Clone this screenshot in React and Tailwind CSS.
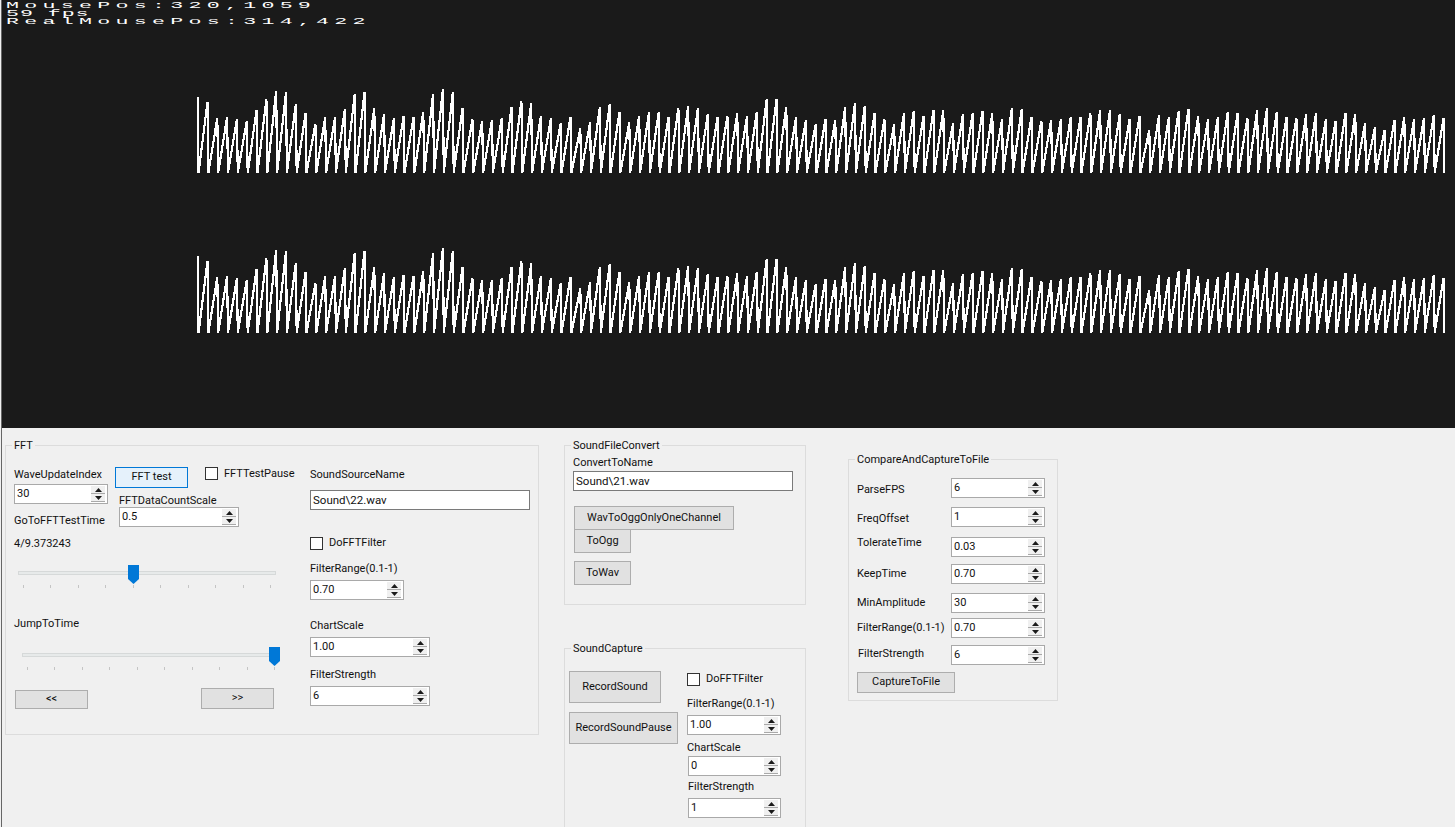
const TOPS = [
  35, 50, 100, 97, 103, 108, 75, 43, 18, 22, 58, 85, 118, 97, 97, 72, 28, 22, 70, 88, 100, 92, 97, 80, 28, 13, 22, 70, 102, 108,
  105, 100, 67, 48, 55, 92, 100, 115, 95, 130, 112, 65, 58, 80, 112, 92, 82, 80, 97, 68, 62, 68, 88, 97, 92, 85, 92, 80, 43, 43, 65, 95, 105,
  118, 103, 105, 67, 55, 63, 85, 102, 118, 85, 78, 92, 75, 75, 115, 88, 85, 78, 85, 102, 70, 73, 95, 108, 105, 102, 97, 97, 85, 75, 75, 87, 102,
  93, 135, 90, 97, 78, 72, 93, 102, 97, 82, 85, 99, 75, 70, 82, 97, 99, 88, 85, 102, 108, 85, 87, 115, 127, 135, 105, 97, 102, 99, 90, 99,
];

function wavePoints(offset) {
  const points = [];
  TOPS.forEach((top, i) => {
    const x = 197.7 + i * 9.81;
    const lift = offset > 0 && i < 30 ? 1 : 0;
    points.push(`${x.toFixed(1)},${(85 + top / 3 + offset - lift).toFixed(1)}`);
    // last peak just drops straight down, no hook at the right end
    points.push(`${(i < TOPS.length - 1 ? x + 0.9 : x).toFixed(1)},${172.5 + offset}`);
  });
  return points.join(" ");
}

function Label({ children, className = "" }) {
  return <div className={`h-4 whitespace-nowrap text-[11px] leading-4 ${className}`}>{children}</div>;
}

function Arrow({ down }) {
  return (
    <svg width="7" height="4" viewBox="0 0 7 4">
      <polygon points={down ? "0,0 7,0 3.5,4" : "0,4 7,4 3.5,0"} fill="#1a1a1a" />
    </svg>
  );
}

function Spinner({ value, className = "" }) {
  return (
    <div className={`flex h-5 items-stretch border border-[#a9a9a9] bg-white ${className}`}>
      <span className="flex-1 pl-0.5 text-[11px] leading-[17px]">{value}</span>
      <div className="my-px mr-0.5 flex w-[14px] flex-col bg-[#f0f0f0]">
        <div className="flex flex-1 items-center justify-center border-b border-[#a9a9a9]"><Arrow /></div>
        <div className="flex flex-1 items-center justify-center border-b border-[#a9a9a9]"><Arrow down /></div>
      </div>
    </div>
  );
}

function TextBox({ value, className = "" }) {
  return <div className={`h-5 border border-[#7a7a7a] bg-white pl-0.5 text-[11.5px] leading-[18px] ${className}`}>{value}</div>;
}

function Button({ children, focused, className = "" }) {
  const tone = focused ? "border-[#0078d7] bg-[#e5f1fb]" : "border-[#adadad] bg-[#e1e1e1]";
  return (
    <div className={`flex items-center justify-center border text-[11px] whitespace-nowrap ${tone} ${className}`}>
      {children}
    </div>
  );
}

function Check({ label, className = "" }) {
  return (
    <div className={`flex items-center gap-1.5 ${className}`}>
      <div className="h-[13px] w-[13px] border border-[#333333] bg-white" />
      <Label>{label}</Label>
    </div>
  );
}

function Group({ title, className = "", children }) {
  return (
    <div className={`relative border border-[#dcdcdc] ${className}`}>
      <span className="absolute top-[-8px] left-[6px] bg-[#f0f0f0] px-0.5 text-[11px] leading-4 whitespace-nowrap">{title}</span>
      {children}
    </div>
  );
}

function Slider({ thumb, className = "" }) {
  const ticks = [0, 1, 2, 3, 4, 5, 6, 7, 8, 9];
  return (
    <div className={`relative h-6 w-[258px] ${className}`}>
      <div className="absolute top-[6px] right-0 left-0 h-1 border border-[#d6d9d9] bg-[#e7eaea]" />
      <svg className="absolute top-0" style={{ left: thumb }} width="11" height="19" viewBox="0 0 11 19">
        <polygon points="0,0 11,0 11,14 5.5,19 0,14" fill="#0078d7" />
      </svg>
      <div className="absolute top-[20px] right-[5px] left-[5px] flex justify-between">
        {ticks.map((t) => (
          <div className="h-[3px] w-px bg-[#c4c4c4]" key={t} />
        ))}
      </div>
    </div>
  );
}

function CompareRow({ label, value, className = "", labelClass = "" }) {
  return (
    <div className={`flex items-center ${className}`}>
      <Label className={`w-[94px] ${labelClass}`}>{label}</Label>
      <Spinner value={value} className="w-[94px]" />
    </div>
  );
}

export default function App() {
  return (
    <div className="flex h-screen overflow-hidden bg-[#f0f0f0] text-[#111111] [font-family:'Roboto','Noto_Sans',sans-serif]">
      <div className="ml-px w-px bg-[#666666]" />
      <div className="flex min-w-0 flex-1 flex-col">
        <div className="h-[428px] shrink-0 bg-[#1a1a1a]">
          <div className="h-6 pt-[2px] pl-[4px] text-white [font-family:'Liberation_Mono',monospace]">
            <div className="h-2 origin-left scale-x-[2.4] text-[9px] leading-[8px] tracking-[2.2px]">MousePos:320,1059</div>
            <div className="h-2 origin-left scale-x-[2.4] text-[9px] leading-[8px] tracking-[0.4px]">59 fps</div>
            <div className="h-2 origin-left scale-x-[2.4] text-[9px] leading-[8px] tracking-[2.2px]">RealMousePos:314,422</div>
          </div>
          <svg width="1453" height="404" viewBox="2 24 1453 404" className="block" shapeRendering="crispEdges">
            <polyline points={wavePoints(0)} fill="none" stroke="#ffffff" strokeWidth="2.2" />
            <polyline points={wavePoints(160)} fill="none" stroke="#ffffff" strokeWidth="2.2" />
          </svg>
        </div>

        <div className="flex flex-1 items-start">
          <Group title="FFT" className="mt-[17px] ml-[3px] h-[290px] w-[534px] shrink-0">
            <div className="flex pt-[21px] pl-2">
              <div className="w-[296px] shrink-0">
                <div className="flex">
                  <div className="w-[101px] shrink-0">
                    <Label>WaveUpdateIndex</Label>
                    <Spinner value="30" className="mt-px w-[94px]" />
                    <Label className="mt-[9px]">GoToFFTTestTime</Label>
                    <Label className="mt-[7px]">4/9.373243</Label>
                  </div>
                  <div>
                    <div className="flex">
                      <Button focused className="h-[21px] w-[73px]">FFT test</Button>
                      <Check label="FFTTestPause" className="ml-[17px] h-[13px]" />
                    </div>
                    <Label className="mt-[5px] ml-[4px]">FFTDataCountScale</Label>
                    <Spinner value="0.5" className="mt-[-2px] ml-[4px] w-[120px]" />
                  </div>
                </div>
                <Slider thumb="110px" className="mt-[13px] ml-1" />
                <Label className="mt-[27px]">JumpToTime</Label>
                <Slider thumb="247px" className="mt-[15px] ml-2" />
                <div className="mt-[17px] ml-px flex w-[259px] items-end justify-between">
                  <Button className="h-[19px] w-[73px]">&lt;&lt;</Button>
                  <Button className="h-[21px] w-[73px]">&gt;&gt;</Button>
                </div>
              </div>
              <div>
                <Label>SoundSourceName</Label>
                <TextBox value="Sound\22.wav" className="mt-[7px] w-[220px]" />
                <Check label="DoFFTFilter" className="mt-[25px]" />
                <Label className="mt-[10px]">FilterRange(0.1-1)</Label>
                <Spinner value="0.70" className="mt-[3px] w-[94px]" />
                <Label className="mt-[18px]">ChartScale</Label>
                <Spinner value="1.00" className="mt-[3px] w-[120px]" />
                <Label className="mt-[10px]">FilterStrength</Label>
                <Spinner value="6" className="mt-[3px] w-[120px]" />
              </div>
            </div>
          </Group>

          <div className="ml-[25px] w-[242px] shrink-0">
            <Group title="SoundFileConvert" className="mt-[17px] h-[160px]">
              <div className="pt-[9px] pl-2">
                <Label>ConvertToName</Label>
                <TextBox value="Sound\21.wav" className="w-[220px]" />
                <Button className="mt-[15px] ml-px h-6 w-40">WavToOggOnlyOneChannel</Button>
                <Button className="mt-[-1px] ml-px h-6 w-[57px]">ToOgg</Button>
                <Button className="mt-2 ml-px h-6 w-[57px]">ToWav</Button>
              </div>
            </Group>
            <Group title="SoundCapture" className="mt-[43px] h-[200px]">
              <div className="flex pt-[22px] pl-1">
                <div className="w-[118px] shrink-0">
                  <Button className="h-8 w-[92px]">RecordSound</Button>
                  <Button className="mt-[9px] h-8 w-[109px]">RecordSoundPause</Button>
                </div>
                <div>
                  <Check label="DoFFTFilter" />
                  <Label className="mt-[9px]">FilterRange(0.1-1)</Label>
                  <Spinner value="1.00" className="mt-[3px] w-[94px]" />
                  <Label className="mt-[5px]">ChartScale</Label>
                  <Spinner value="0" className="ml-px w-[93px]" />
                  <Label className="mt-[3px] ml-px">FilterStrength</Label>
                  <Spinner value="1" className="mt-[3px] ml-px w-[93px]" />
                </div>
              </div>
            </Group>
          </div>

          <Group title="CompareAndCaptureToFile" className="mt-[31px] ml-[42px] h-[242px] w-[210px] shrink-0">
            <div className="pt-[18px] pl-2">
              <CompareRow label="ParseFPS" value="6" labelClass="translate-y-[2px]" />
              <CompareRow label="FreqOffset" value="1" className="mt-[9px]" labelClass="translate-y-[2px]" />
              <CompareRow label="TolerateTime" value="0.03" className="mt-[10px]" labelClass="-translate-y-[4px]" />
              <CompareRow label="KeepTime" value="0.70" className="mt-[7px]" />
              <CompareRow label="MinAmplitude" value="30" className="mt-[9px]" />
              <CompareRow label="FilterRange(0.1-1)" value="0.70" className="mt-[5px]" />
              <CompareRow label="FilterStrength" value="6" className="mt-[7px]" labelClass="ml-px -mr-px -translate-y-px" />
              <Button className="mt-[7px] h-[21px] w-[98px]">CaptureToFile</Button>
            </div>
          </Group>
        </div>
      </div>
    </div>
  );
}
